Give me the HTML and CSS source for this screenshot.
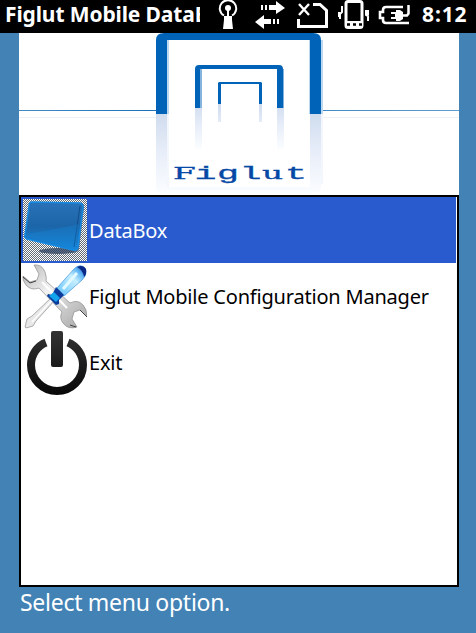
FILE: index.html
```html
<!DOCTYPE html>
<html lang="en">
<head>
<meta charset="utf-8">
<title>Figlut Mobile DataBox</title>
<link rel="stylesheet" href="styles.css">
</head>
<body>
<header class="status">
  <div class="title">Figlut Mobile DataBox</div>
  <svg class="tray" width="210" height="33" viewBox="210 0 210 33" fill="none" stroke="#fff" stroke-width="2">
    <path d="M224 15.500A8.200 8.200 0 1 1 232 15.500"/><circle cx="228" cy="8" r="3" fill="#fff" stroke="none"/>
    <path d="M227 9h2v7h3v4l1 9h-10l1-9v-4h3z" fill="#fff" stroke="none"/>
    <path d="M261 5h2v5h-2zM265 5h2v5h-2zM269 5h7V1l9 7-9 6v-4h-7zM279 19h-2v5h2zM275 19h-2v5h2zM271 19h-7v-4l-9 7 9 7v-5h7z" fill="#fff" stroke="none"/>
    <path d="M299 4l10 11M309 4l-10 11" stroke-width="2.4"/>
    <path d="M313 4.500h7l6.500 6v16h-28V19" stroke-width="3"/>
    <rect x="346" y="1.500" width="16" height="26" rx="2" stroke-width="3"/>
    <path d="M345 21h18v7h-18z" fill="#fff" stroke="none"/>
    <path d="M347 24.500h3m3 0h3m3 0h3" stroke="#000" stroke-width="2.500"/>
    <path d="M342 6v6l-2 2v5M366 10v5l2 1v5M339 12v5M368 10v5"/>
    <path d="M403 7h-17q-3 0-3 3v2h-3v6h3v2q0 3 3 3h23" stroke-width="2.600"/>
    <path d="M402 15.500h5l1.500-2V5" stroke-width="2.500"/>
    <path d="M391 12h5v-2h4l3 2v7l-3 2h-4v-2h-5v-2h4v-3h-4z" fill="#fff" stroke="none"/>
  </svg>
  <time class="clock">8:12</time>
</header>
<main class="screen">
  <svg class="banner" width="440" height="162" viewBox="19 33 440 162">
    <defs>
      <linearGradient id="line"><stop offset="0" stop-color="#458bc2"/><stop offset=".3" stop-color="#1c71b9"/><stop offset="1" stop-color="#609dcc"/></linearGradient>
      <linearGradient id="fade" x1="0" x2="0" y1="0" y2="1"><stop offset="0" stop-color="#cfdcee"/><stop offset=".4" stop-color="#e4ebf8"/><stop offset="1" stop-color="#fbfdff"/></linearGradient>
    </defs>
    <path fill="#fff" d="M19 33h440v162H19z"/>
    <path fill="url(#line)" d="M19 110h137v1H19zM321 110h138v1H321z"/>
    <path fill="#edf2f8" d="M19 117h137v1H19zM321 117h138v1H321z"/>
    <path fill="#bcd7ee" d="M167 40h2v74h-2zM321 40h2v74h-2zM309 40h1v74h-1z"/>
    <path fill="#0063b8" d="M156 114V40q0-7 8-7h149q8 0 8 7v74h-11V40H167v74z"/>
    <path fill="#85b5dc" d="M200 69h2v39h-2zM283 69h1v39h-1z"/>
    <path fill="#0063b8" d="M195 108V69q0-4 4-4h80q4 0 4 4v39h-6V69h-77v39z"/>
    <path fill="#0063b8" d="M218 104V83l1-1h42l1 1v21h-3V84h-38v20z"/>
    <path fill="url(#fade)" d="M156 114h11v73h143v-73h11v74q0 5-5 5H161q-5 0-5-5z"/>
    <path fill="#f3f6fd" d="M167 114h2v73h-2zM321 114h2v70h-2z"/>
    <path fill="url(#fade)" d="M195 108h7v41h-7zM277 108h7v41h-7zM218 104h3v18h-3zM259 104h3v18h-3z"/>
    <text class="brand" transform="translate(0 179) scale(1.93 1)" x="89.600 100.800 112.400 124.100 135.800 147.700" y="0"><tspan class="slab">F</tspan>igl<tspan class="slab">u</tspan>t</text>
  </svg>
  <ul class="menu">
    <li class="row selected">
      <svg width="66" height="66" viewBox="21 197 66 66">
        <defs>
          <pattern id="dither" width="2" height="2" patternUnits="userSpaceOnUse"><path fill="#fff" d="M0 0h2v2H0z"/><path fill="#626b78" d="M1 0h1v1h-1zM0 1h1v1H0z"/></pattern>
          <linearGradient id="glass" x1="0" x2="0" y1="0" y2="1"><stop offset="0" stop-color="#2a72b8"/><stop offset=".5" stop-color="#1c65a8"/><stop offset="1" stop-color="#1686da"/></linearGradient>
          <pattern id="shadow" width="2" height="2" patternUnits="userSpaceOnUse"><path fill="#344b70" d="M0 0h1v1H0zM1 1h1v1H1z"/></pattern>
        </defs>
        <path fill="url(#dither)" d="M23 199h64v62H23z"/>
        <ellipse cx="58" cy="251" rx="19" ry="3" fill="url(#shadow)"/>
        <path fill="#596e88" d="M80 203q4 0 4 5l-5 41q-1 4-5 3z"/>
        <path fill="url(#glass)" stroke="#168ae2" stroke-width="1.500" d="M32 202l47 1q4 0 4 4l-5 40q-1 4-5 3l-46-11q-3-1-2-4l4-29q0-4 3-4z"/>
        <path fill="none" stroke="#104d8c" d="M80 206l-6 41"/>
        <path fill="#1687dc" opacity=".3" d="M25 234q24-3 54-10l-4 25-47-11z"/>
      </svg><span>DataBox</span>
    </li>
    <li class="row">
      <svg width="66" height="66" viewBox="21 263 66 66">
        <defs>
          <linearGradient id="steel" x1="0" y1="0" x2="1" y2="1"><stop offset="0" stop-color="#b5b5b5"/><stop offset=".4" stop-color="#f2f2f2"/><stop offset=".65" stop-color="#cdcdcd"/><stop offset="1" stop-color="#a5a5a5"/></linearGradient>
          <linearGradient id="handle" gradientUnits="userSpaceOnUse" x1="60" y1="290" x2="86" y2="266"><stop offset="0" stop-color="#7acdff"/><stop offset=".5" stop-color="#c6efff"/><stop offset=".75" stop-color="#5cb4f4"/><stop offset="1" stop-color="#07248c"/></linearGradient>
        </defs>
        <path fill="url(#steel)" stroke="#8c8c8c" stroke-width=".7" d="M34 265q8-1 11 7 2 6 1 9l24 22q8-4 13 2 4 4 4 12l-7-7-6 2-2 7 5 8q-9 3-14-4-4-5-1-11L39 288q-8 3-13-3-4-5-3-9l7 6 7-2 2-6z"/>
        <path fill="none" stroke="#fff" stroke-width="2" d="M42 282l25 26"/>
        <path fill="none" stroke="#444" d="M23 277l7 6 6-2M76 327l-6-2M87 317l-7-7"/>
        <path fill="#e8e8e8" stroke="#999" stroke-width=".8" d="M52 297l3 3-19 21-3 5-7 2-1-1 2-8 5-3z"/>
        <path stroke="#fff" stroke-width="1.500" d="M52 300l-20 22"/>
        <path fill="url(#handle)" stroke="#3f94d8" stroke-width=".7" d="M57 288l17-19q6-6 11-1 3 6-3 12l-18 16z"/>
        <path stroke="#e2faff" stroke-width="3" d="M63 289l14-16"/>
        <path fill="#0a2887" d="M77 267q6-3 9 2 1 5-2 8-1-7-7-10z"/>
        <path fill="#0b3b9b" d="M56 287l8 8-5 5v4l-3 1-9-9 1-2 4 1z"/>
        <path fill="#14a4ed" d="M54 292l6 6-4 4-7-6z"/>
      </svg><span>Figlut Mobile Configuration Manager</span>
    </li>
    <li class="row">
      <svg width="66" height="66" viewBox="21 329 66 66">
        <defs><linearGradient id="ink" gradientUnits="userSpaceOnUse" x1="0" x2="0" y1="331" y2="395"><stop offset="0" stop-color="#333"/><stop offset="1" stop-color="#080808"/></linearGradient></defs>
        <path fill="none" stroke="url(#ink)" stroke-width="8" d="M46 342.500C37 346 31 355 31 365a26 26 0 0 0 52 0C83 355 77 346 68 342.500"/>
        <rect x="51" y="331" width="12" height="36" rx="2" fill="url(#ink)"/>
      </svg><span>Exit</span>
    </li>
  </ul>
  <p class="hint">Select menu option.</p>
</main>
</body>
</html>
```
FILE: styles.css
```css
* { box-sizing: border-box; }
body {
  margin: 0;
  height: 633px;
  overflow: hidden;
  background: #4282b5;
  font-family: "Noto Sans", sans-serif;
}
.status {
  display: flex;
  height: 33px;
  padding-left: 5px;
  background: #000;
  color: #fff;
  font: bold 21px/29px "Noto Sans", sans-serif;
}
.title { width: 195px; overflow: hidden; white-space: nowrap; letter-spacing: -.12px; }
.tray { margin-left: 10px; flex: none; }
.clock { margin-left: 2px; letter-spacing: .9px; }
.screen { width: 440px; margin-left: 19px; }
.banner { display: block; }
.brand { font: 19px "Liberation Mono", monospace; fill: #0548a5; stroke: #0548a5; stroke-width: .3px; }
.slab { font: 17px "DejaVu Serif", serif; }
.menu {
  height: 392px;
  margin: 0;
  padding: 0 1px 0 0;
  border: 2px solid #000;
  background: #fff;
  list-style: none;
}
.row {
  display: flex;
  align-items: center;
  height: 66px;
  gap: 2px;
  font: 20px/24px "Noto Sans", sans-serif;
  letter-spacing: -.2px;
  white-space: nowrap;
}
.row svg { flex: none; }
.row span { padding-top: 2px; }
.selected { background: #295bce; color: #fff; }
.hint { margin: 0; padding-left: 1px; color: #fff; font: 23px/31px "Noto Sans", sans-serif; letter-spacing: -.28px; }
```
